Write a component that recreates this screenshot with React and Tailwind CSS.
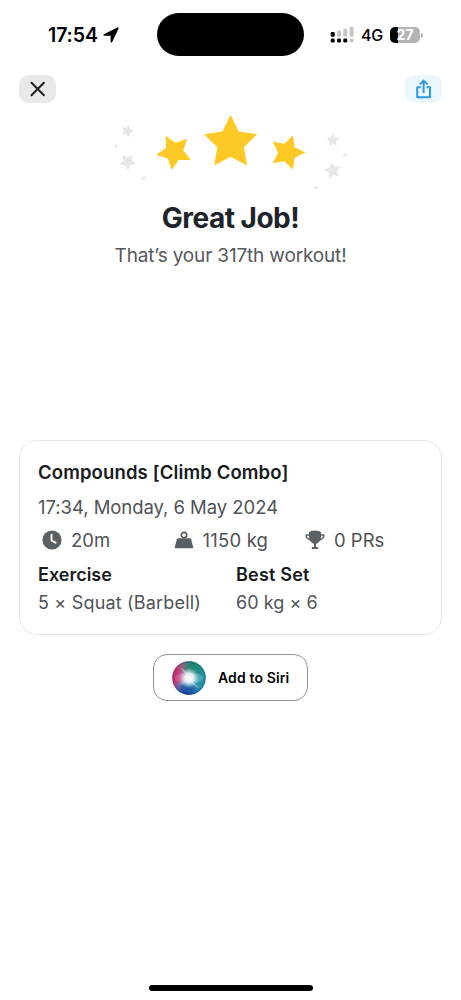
const starPoints = (cx, cy, r, rot, ratio = 0.5) =>
  Array.from({ length: 10 }, (_, i) => {
    const a = ((-90 + rot + i * 36) * Math.PI) / 180;
    const d = i % 2 ? r * ratio : r;
    return `${(cx + d * Math.cos(a)).toFixed(2)},${(cy + d * Math.sin(a)).toFixed(2)}`;
  }).join(" ");

function Stars() {
  return (
    <svg className="mx-auto block" width="241" height="84" viewBox="110 110 241 84">
      <g fill="#fcc927">
        <polygon points={starPoints(230.6, 142.8, 28, 0)} />
        <polygon points={starPoints(174.3, 151.9, 18.4, -28)} />
        <polygon points={starPoints(287.3, 152.5, 18.2, 18)} />
      </g>
      <g fill="#e6e7e8">
        <polygon points={starPoints(127.3, 131, 6.6, 18)} />
        <polygon points={starPoints(127.6, 161.6, 8.8, 33)} />
        <polygon points={starPoints(332.8, 140.3, 6.8, 0)} />
        <polygon points={starPoints(332.7, 170.7, 8.8, -10)} />
        <circle cx="115.7" cy="145.7" r="1.5" />
        <circle cx="143.8" cy="177.8" r="1.6" />
        <circle cx="344.4" cy="154.8" r="1.5" />
        <circle cx="315.9" cy="187.6" r="1.6" />
      </g>
    </svg>
  );
}

function StatusBar() {
  return (
    <header className="grid h-[69px] grid-cols-[157px_147px_157px] items-start text-black">
      <div className="flex items-center gap-[5px] pt-[22.5px] pl-[48px]">
        <span className="text-[19.5px] leading-[24px] font-semibold tracking-[-0.1px]">17:54</span>
        <svg width="16" height="16" viewBox="0 0 16 16">
          <path d="M.9 7.300 14.200.5Q16 0 15.500 1.800L9.200 15Q8.100 16.300 7.600 14.600V8.700H1.300Q-.5 8.200.9 7.300Z" />
        </svg>
      </div>
      <div className="mt-[13px] h-[43px] rounded-full bg-black" />
      <div className="flex items-center pt-[23px] pl-[26px]">
        <svg width="24" height="18" viewBox="0 0 24 18">
          <g fill="#000">
            <rect x="0.700" y="6" width="4" height="4.800" rx="1.200" />
            <rect x="0.700" y="12.600" width="4" height="4" rx="1.400" />
            <rect x="7" y="12.600" width="4" height="4" rx="1.400" />
            <rect x="13.300" y="12.600" width="4" height="4" rx="1.400" />
          </g>
          <g fill="#c5c5c5">
            <rect x="7" y="4.500" width="4" height="6.300" rx="1.200" />
            <rect x="13.300" y="2.700" width="4" height="8.100" rx="1.200" />
            <rect x="19.600" y="0.700" width="4" height="10.100" rx="1.200" />
            <rect x="19.600" y="12.600" width="4" height="4" rx="1.400" />
          </g>
        </svg>
        <span className="ml-[7px] text-[16px] leading-[24px] font-medium tracking-[-0.2px]">4G</span>
        <div className="ml-[7px] flex h-4 w-[30px] items-center justify-center rounded-[5px] bg-[linear-gradient(90deg,#000_27%,#b5b5b5_27%)] text-[14px] leading-4 font-bold text-white">
          27
        </div>
        <div className="ml-px h-[5px] w-[2px] rounded-r-full bg-[#b5b5b5]" />
      </div>
    </header>
  );
}

function Siri() {
  return (
    <svg width="34" height="34" viewBox="0 0 34 34">
      <defs>
        <linearGradient id="orb" x1="0" y1="0.4" x2="1" y2="0.6">
          <stop offset="0" stopColor="#cf1f68" />
          <stop offset="0.28" stopColor="#b9588f" />
          <stop offset="0.52" stopColor="#4a9aa3" />
          <stop offset="1" stopColor="#1b90a8" />
        </linearGradient>
        <radialGradient id="green" cx="0.64" cy="0.08" r="0.5">
          <stop offset="0" stopColor="#168366" />
          <stop offset="1" stopColor="#168366" stopOpacity="0" />
        </radialGradient>
        <radialGradient id="blue" cx="0.42" cy="1" r="0.5">
          <stop offset="0" stopColor="#183b91" />
          <stop offset="0.5" stopColor="#1c59ae" stopOpacity="0.8" />
          <stop offset="1" stopColor="#2a7ac4" stopOpacity="0" />
        </radialGradient>
        <radialGradient id="shine" cx="0.5" cy="0.5" r="0.3">
          <stop offset="0" stopColor="#fff" />
          <stop offset="0.45" stopColor="#fbfdff" stopOpacity="0.85" />
          <stop offset="1" stopColor="#cbe9f5" stopOpacity="0" />
        </radialGradient>
      </defs>
      <circle cx="17" cy="17" r="16.800" fill="url(#orb)" />
      <circle cx="17" cy="17" r="16.800" fill="url(#green)" />
      <circle cx="17" cy="17" r="16.800" fill="url(#blue)" />
      <path d="M17 17C22 11 29 12 31 17C29 22 23 23 17 17Z" fill="#9fe0ea" opacity="0.3" />
      <path d="M17 17C12 11 5 12 3 17C5 22 11 24 17 17Z" fill="#f08fbd" opacity="0.3" />
      <path d="M17 17 8 6.500Q13 7 17 17ZM17 17 27.500 27Q20 25 17 17Z" fill="#fff" opacity="0.35" />
      <path d="M17 17 6 23Q12 26 17 17Z" fill="#8cc8ef" opacity="0.4" />
      <circle cx="17" cy="17" r="16.800" fill="url(#shine)" />
      <circle cx="17" cy="17" r="16.200" fill="none" stroke="#164263" strokeOpacity="0.35" strokeWidth="1" />
    </svg>
  );
}

const icons = {
  clock: (
    <svg width="20" height="20" viewBox="0 0 20 20">
      <circle cx="10" cy="10" r="9.600" fill="#5a5f63" />
      <path d="M9.500 4.800V10.500L13.500 12.700" fill="none" stroke="#fff" strokeWidth="1.900" strokeLinecap="round" strokeLinejoin="round" />
    </svg>
  ),
  weight: (
    <svg width="20" height="20" viewBox="0 0 20 20" fill="#5a5f63">
      <circle cx="10" cy="5" r="2.700" fill="none" stroke="#5a5f63" strokeWidth="1.700" />
      <path d="M4.300 8.200H15.700Q16.800 8.200 17.100 9.200L19.200 16.900Q19.500 18.300 18.200 18.300H1.800Q.5 18.300.8 16.900L2.900 9.200Q3.200 8.200 4.300 8.200Z" />
    </svg>
  ),
  trophy: (
    <svg width="20" height="20" viewBox="0 0 20 20">
      <path d="M4.500 5.100H1.200C1 7.900 3 9.500 6.500 10M15.500 5.100H18.800C19 7.900 17 9.500 13.500 10" fill="none" stroke="#5a5f63" strokeWidth="1.500" strokeLinejoin="round" />
      <path d="M4 2.200Q5.500.6 10 .6T16 2.200V6.500C16 10.200 13.900 13 11 13.800V17H13.200V19H6.800V17H9V13.800C6.100 13 4 10.200 4 6.500Z" fill="#5a5f63" />
    </svg>
  ),
};

function Stat({ icon, children }) {
  return (
    <div className="flex items-center gap-[9px]">
      {icons[icon]}
      <span>{children}</span>
    </div>
  );
}

export default function App() {
  return (
    <div className="flex h-[1000px] w-[461px] flex-col bg-white font-['Inter','Liberation_Sans',sans-serif] whitespace-nowrap">
      <StatusBar />
      <nav className="flex h-[41px] justify-between px-[19px] pt-[6px]">
        <button aria-label="Close" className="flex h-7 w-[37px] items-center justify-center rounded-[9px] bg-[#e8e9e9]">
          <svg width="16" height="16" viewBox="0 0 16 16" fill="none" stroke="#1c2024" strokeWidth="2" strokeLinecap="round">
            <path d="M1.500 1.800 13.900 14.200M13.900 1.800 1.500 14.200" />
          </svg>
        </button>
        <button aria-label="Share" className="flex h-7 w-[37px] items-center justify-center rounded-[9px] bg-[#ebf6fd]">
          <svg width="16" height="20" viewBox="0 0 16 20" fill="none" stroke="#2d98e5" strokeWidth="2" strokeLinejoin="round">
            <path d="M4.800 8.200H1.200V18.300H14V8.200H10.500M7.600 14V1.800M3.800 5.400 7.600 1.600 11.400 5.400" />
          </svg>
        </button>
      </nav>
      <Stars />
      <h1 className="mt-[6px] text-center text-[28px] leading-9 font-bold tracking-[-0.5px] text-[#202429]">Great Job!</h1>
      <p className="mt-[8px] text-center text-[19px] leading-6 tracking-[-0.16px] text-[#55585b]">That’s your 317th workout!</p>
      <main className="mt-[172px] flex flex-col items-center">
        <section className="flex h-[195px] w-[423px] flex-col rounded-[18px] border border-[#e4e5e6] px-[18px] pt-[19px] text-[18px] leading-6 text-[#4f5356]">
          <h2 className="text-[18.5px] font-semibold tracking-[0.13px] text-[#181b20]">Compounds [Climb Combo]</h2>
          <p className="mt-[11px] text-[18.5px] tracking-[-0.05px]">17:34, Monday, 6 May 2024</p>
          <div className="mt-[9px] grid grid-cols-[131.5px_131.5px_auto] pl-[4px] text-[18.500px]">
            <Stat icon="clock">20m</Stat>
            <Stat icon="weight"><span className="tracking-[0.2px]">1150 kg</span></Stat>
            <Stat icon="trophy">0 PRs</Stat>
          </div>
          <div className="mt-[11px] grid grid-cols-[198px_auto] gap-y-1">
            <h3 className="font-semibold text-[#181b20]">Exercise</h3>
            <h3 className="font-semibold tracking-[0.2px] text-[#181b20]">Best Set</h3>
            <p className="tracking-[0.18px]">5 × Squat (Barbell)</p>
            <p className="tracking-[0.05px]">60 kg × 6</p>
          </div>
        </section>
        <button className="mt-[19px] flex h-[47px] w-[155px] items-center gap-3 rounded-[14px] border border-[#929292] pl-[18px] text-[14px] font-semibold tracking-[0.12px] text-black">
          <Siri />
          <span>Add to Siri</span>
        </button>
      </main>
      <div className="mx-auto mt-auto mb-[9px] h-[6px] w-[164px] rounded-full bg-black" />
    </div>
  );
}
